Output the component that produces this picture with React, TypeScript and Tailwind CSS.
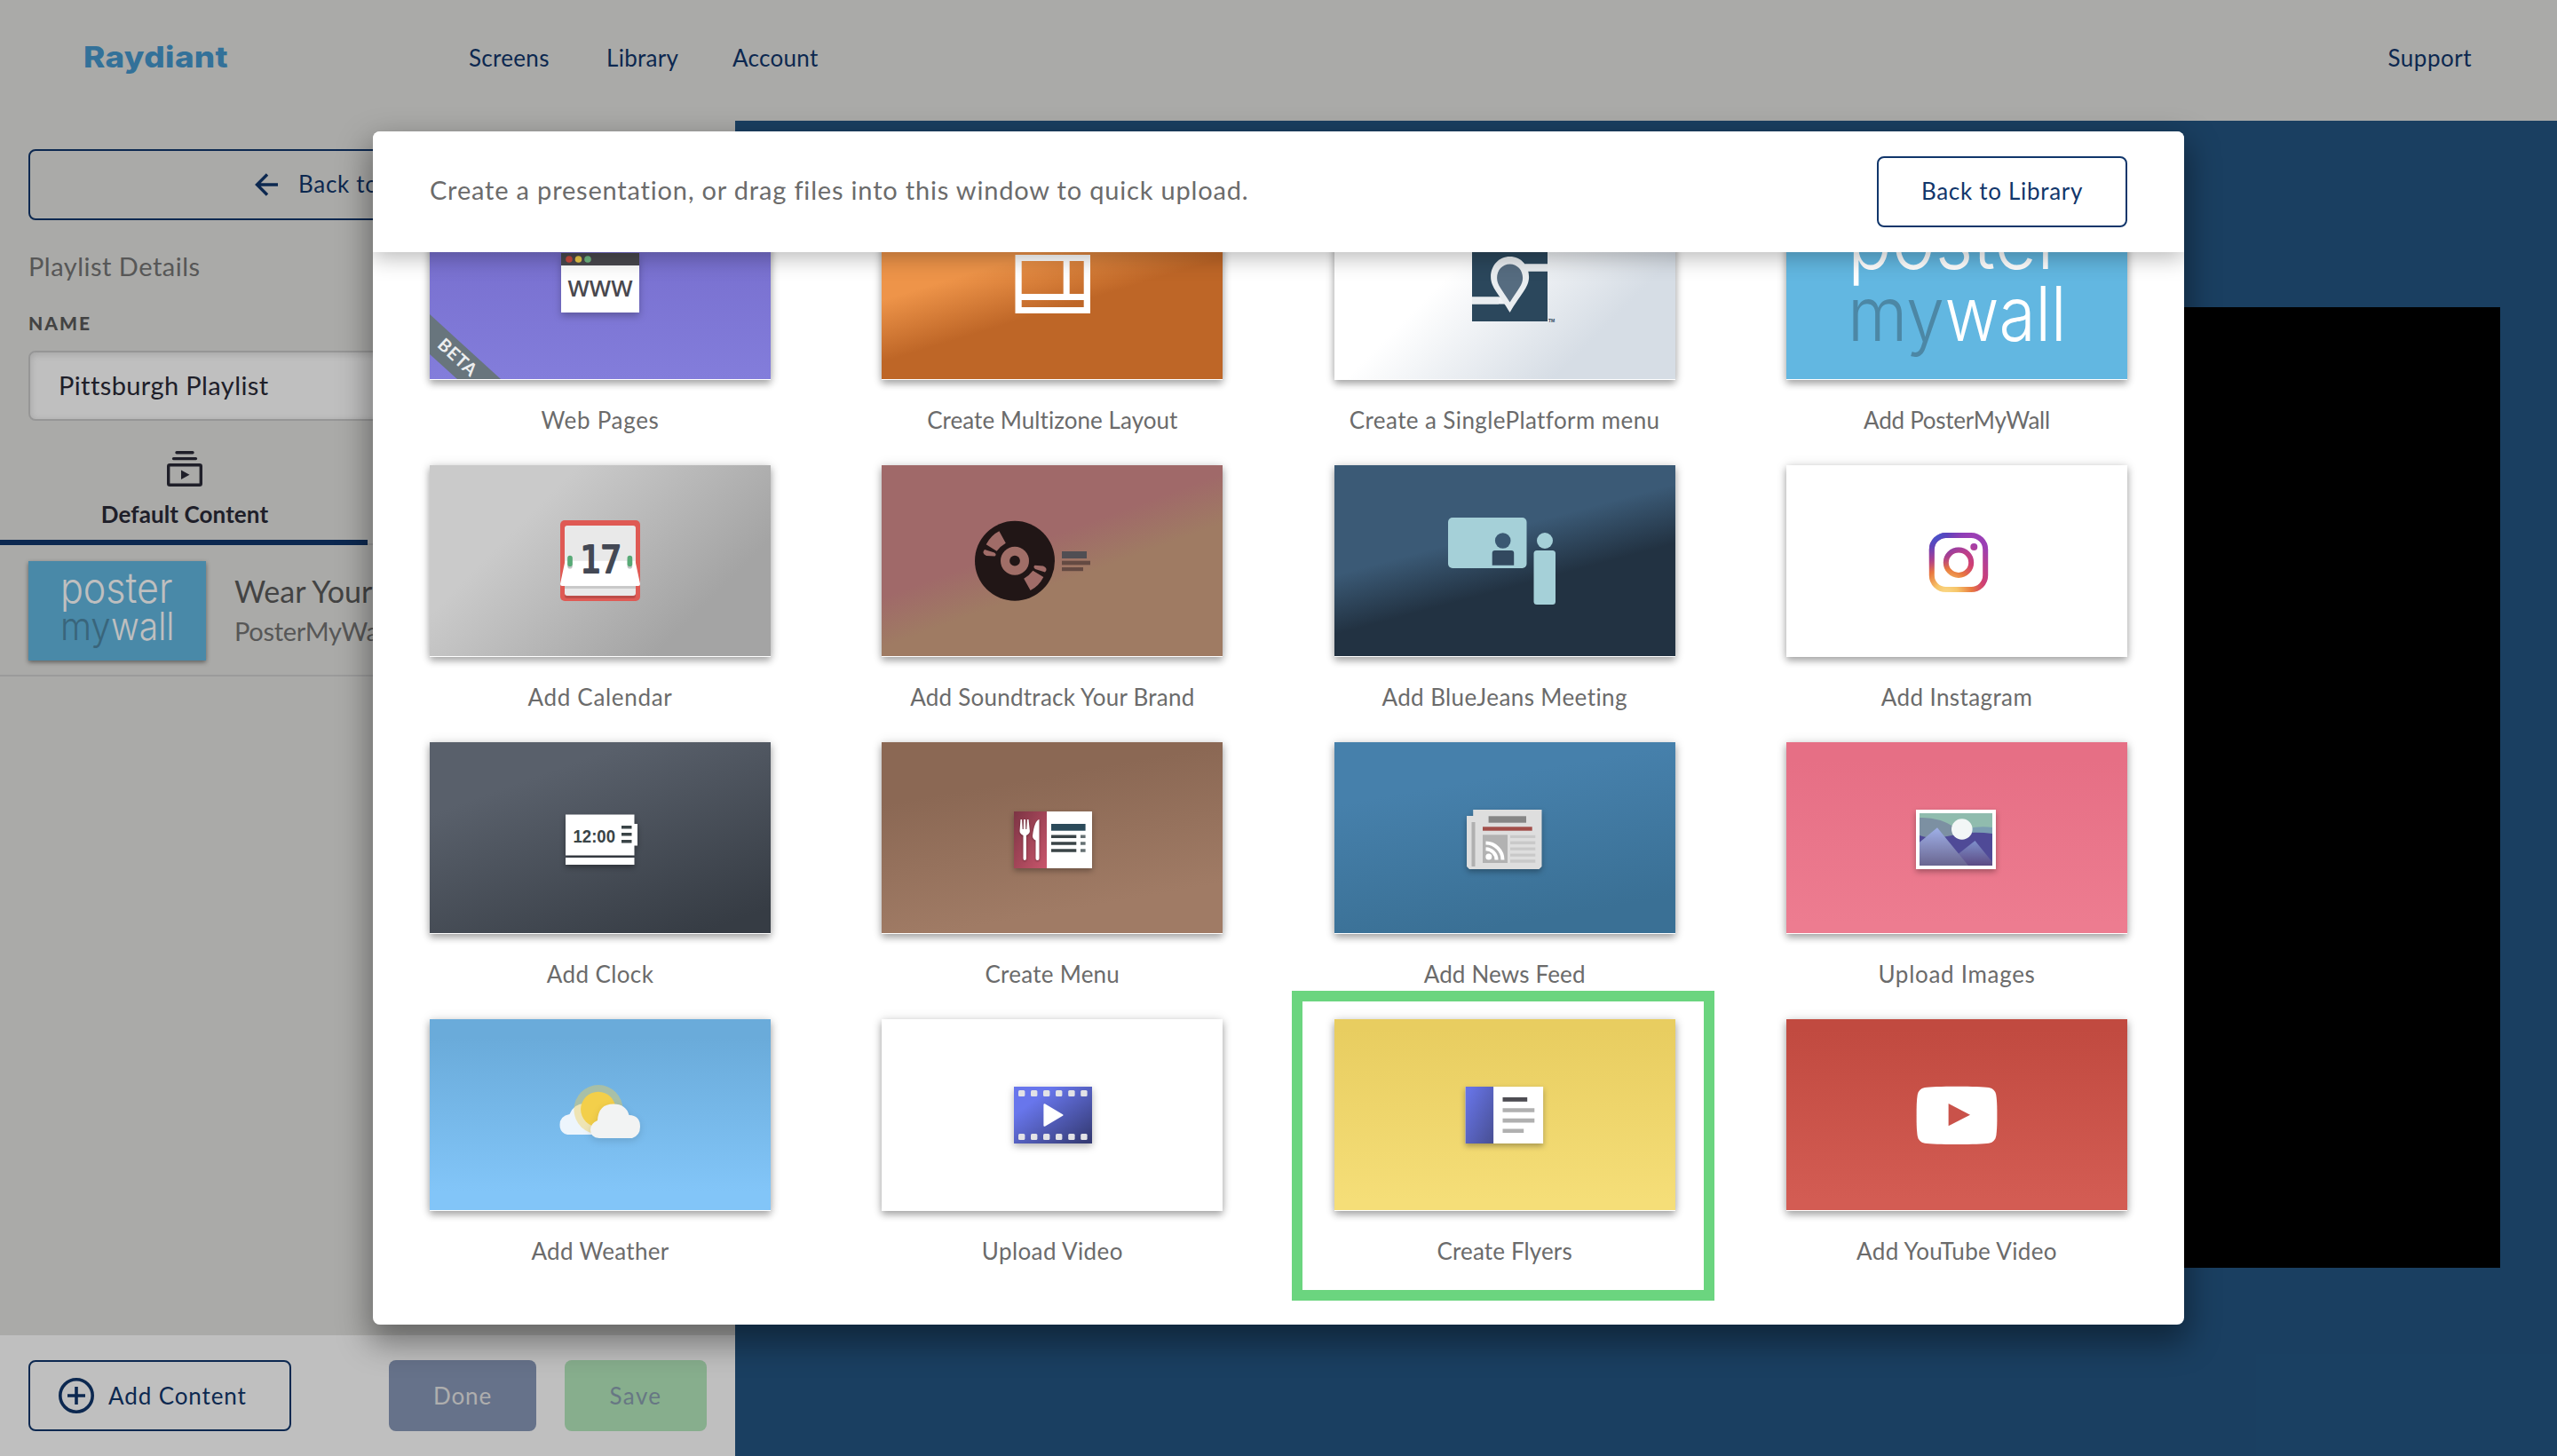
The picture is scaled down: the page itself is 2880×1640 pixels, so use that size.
import React, { ReactNode } from 'react';
import { clsx } from 'clsx';

/* ------------------------------------------------------------------ */
/* Shared pieces                                                        */
/* ------------------------------------------------------------------ */

function PosterMyWallLogo() {
  return (
    <g fontFamily="Inter, sans-serif" fontWeight="300" fill="#fff">
      <text x="69" y="91" fontSize="92" textLength="243" lengthAdjust="spacingAndGlyphs">
        poster
      </text>
      <text x="69" y="171.600" fontSize="85" textLength="109" lengthAdjust="spacingAndGlyphs" fill="#4c87a5">
        my
      </text>
      <text x="178.500" y="171.600" fontSize="85" textLength="137" lengthAdjust="spacingAndGlyphs">
        wall
      </text>
    </g>
  );
}

/* ------------------------------------------------------------------ */
/* Card artwork, drawn on the 384x216 card area                         */
/* ------------------------------------------------------------------ */

const WebPagesArt = () => (
  <>
    <g className="drop-shadow-[0_4px_4px_rgba(0,0,0,0.25)]">
      <rect x="148" y="73" width="88" height="67" fill="#fff" />
      <rect x="148" y="73" width="88" height="14" fill="#49484e" />
    </g>
    <circle cx="157" cy="80" r="3.8" fill="#c9483f" />
    <circle cx="167.5" cy="80" r="3.8" fill="#edca48" />
    <circle cx="178" cy="80" r="3.8" fill="#70b983" />
    <text x="192" y="122" fontFamily="Open Sans, sans-serif" fontSize="25" fontWeight="600" fill="#49484e" textAnchor="middle" textLength="73" lengthAdjust="spacingAndGlyphs">
      WWW
    </text>
    <path d="M0 142 80 215H31L0 187Z" fill="#68757d" />
    <text x="0" y="0" transform="translate(31.5 190.5) rotate(42.5)" dy="7" fontFamily="Lato, sans-serif" fontSize="20" fontWeight="700" fill="#eceeef" textAnchor="middle" letterSpacing="0.8">
      BETA
    </text>
  </>
);

const MultizoneArt = () => (
  <path
    fillRule="evenodd"
    fill="#fff"
    d="M150.5 75h84.5v66h-84.5ZM157.7 82v37h47v-37ZM211.7 82v37h16v-37ZM157.7 126v8h70v-8Z"
  />
);

const SinglePlatformArt = () => (
  <>
    <path d="M155 60h85v25.500h-85Z M155 60h45v62.500h-45Z M215 93.500h25v56.500h-85v-19.500h45Z" fill="#2b475c" />
    <path d="M155 122.500h30v8h-30Z M215 85.500h25v8h-25Z" fill="#e9edf0" />
    <path d="M197.600 77c-12.500 0-21.500 10-21.500 23 0 12 10 20 21.500 40 11.500-20 21.500-28 21.500-40 0-13-9-23-21.500-23Z" fill="#e9edf0" />
    <path d="M197.600 85.500c-8.500 0-14.500 7-14.500 15.500 0 8 5.500 13 14.500 27.500 9-14.500 14.500-19.500 14.500-27.500 0-8.500-6-15.500-14.500-15.500Z" fill="#566c80" />
    <text x="241" y="151" fontFamily="Liberation Sans, sans-serif" fontSize="5" fontWeight="700" fill="#2b475c">
      TM
    </text>
  </>
);

const CalendarArt = () => (
  <>
    <rect x="147" y="62" width="90" height="91" rx="5" fill="#df5a54" />
    <rect x="152" y="71" width="80" height="79" rx="3" fill="#bd4c48" />
    <rect x="152" y="68" width="80" height="79" rx="3" fill="#e9e9e9" />
    <rect x="152" y="136" width="80" height="3" fill="#c9c9c9" />
    <path d="M152.500 107.700h79l5.500 26q0 2.300-2 2.300h-86q-2 0-2-2.300Z" fill="#fff" />
    <rect x="155.200" y="104" width="5.600" height="12.500" rx="2.800" fill="#bfc4c2" />
    <rect x="222.600" y="104" width="5.600" height="12.500" rx="2.800" fill="#bfc4c2" />
    <rect x="155.200" y="101.700" width="5.600" height="12.300" rx="2.800" fill="#58aa76" />
    <rect x="222.600" y="101.700" width="5.600" height="12.300" rx="2.800" fill="#58aa76" />
    <text
      x="169"
      y="120.500"
      fontFamily="DejaVu Sans Mono, monospace"
      fontSize="43.500"
      fill="#434854"
      stroke="#434854"
      strokeWidth="2.200"
      strokeLinejoin="round"
      textLength="47"
      lengthAdjust="spacingAndGlyphs"
    >
      17
    </text>
  </>
);

const SoundtrackArt = () => (
  <>
    <circle cx="150" cy="107.700" r="45" fill="#211616" />
    <circle cx="150" cy="107.700" r="16" fill="#a06e67" />
    <circle cx="150" cy="107.700" r="5.900" fill="#211616" />
    <g fill="#a06c68">
      <path d="M132.400 74.300 139.800 87.700Q134 91 129.600 96.700L117.700 89.300Q123 79 132.400 74.300Z" />
      <path d="M116 95 127 98.500Q130 100.500 127.500 102.600L118 102Q112 99 116 95Z" />
      <g transform="rotate(180 150 107.700)">
        <path d="M132.400 74.300 139.800 87.700Q134 91 129.600 96.700L117.700 89.300Q123 79 132.400 74.300Z" />
        <path d="M116 95 127 98.500Q130 100.500 127.500 102.600L118 102Q112 99 116 95Z" />
      </g>
    </g>
    <rect x="203" y="97" width="28" height="8" fill="#504e53" />
    <rect x="203" y="107.700" width="32" height="4.600" fill="#644a42" />
    <rect x="203" y="115" width="24" height="4.200" fill="#644a42" />
  </>
);

const BlueJeansArt = () => (
  <>
    <rect x="128" y="59" width="88.500" height="57" rx="5" fill="#a5d0d8" />
    <circle cx="189.700" cy="85" r="8.800" fill="#3a5873" />
    <path d="M177.700 99q0-3 3-3h18.500q3 0 3 3v13.700h-24.500Z" fill="#32495f" />
    <circle cx="237" cy="85" r="9" fill="#a5d0d8" />
    <rect x="224.500" y="96" width="24.500" height="61" rx="3.500" fill="#a5d0d8" />
  </>
);

const InstagramArt = () => (
  <>
    <defs>
      <radialGradient id="ig-warm" gradientUnits="userSpaceOnUse" cx="180" cy="146" r="70">
        <stop offset="0" stopColor="#fbdc8c" />
        <stop offset="0.2" stopColor="#f6c468" />
        <stop offset="0.42" stopColor="#e8793f" />
        <stop offset="0.62" stopColor="#d03f72" />
        <stop offset="1" stopColor="#9b3fb5" />
      </radialGradient>
      <radialGradient id="ig-cool" gradientUnits="userSpaceOnUse" cx="166" cy="76" r="44">
        <stop offset="0" stopColor="#3c5bd0" />
        <stop offset="0.35" stopColor="#5145c0" stopOpacity="0.85" />
        <stop offset="1" stopColor="#8a3ab9" stopOpacity="0" />
      </radialGradient>
    </defs>
    {['url(#ig-warm)', 'url(#ig-cool)'].map((paint) => (
      <g key={paint} fill="none" stroke={paint} strokeWidth="6">
        <rect x="163.800" y="79" width="60.400" height="61" rx="16" />
        <circle cx="194" cy="109.700" r="14.200" />
        <circle cx="211.300" cy="92" r="4" fill={paint} stroke="none" />
      </g>
    ))}
  </>
);

const ClockArt = () => (
  <>
    <g fill="#fff" className="drop-shadow-[0_3px_3px_rgba(0,0,0,0.35)]">
      <path d="M153 81.500h77.500V92h3.500v24.500h-3.500v11H153Z" />
      <rect x="153" y="130" width="77.500" height="8" />
    </g>
    <text x="161.500" y="112.700" fontFamily="Liberation Sans, sans-serif" fontSize="21" fontWeight="700" fill="#3a4447" textLength="47.500" lengthAdjust="spacingAndGlyphs">
      12:00
    </text>
    <path d="M216 94h11.500v3.400H216Z M216 102h11.500v3.400H216Z M216 110h11.500v3.400H216Z" fill="#3a4447" />
  </>
);

const MenuArt = () => (
  <>
    <defs>
      <linearGradient id="menu-red" x1="0" y1="0" x2="1" y2="1">
        <stop offset="0" stopColor="#7c3444" />
        <stop offset="1" stopColor="#c9566c" />
      </linearGradient>
    </defs>
    <g className="drop-shadow-[0_3px_3px_rgba(0,0,0,0.3)]">
      <rect x="149" y="78" width="88" height="64" fill="#fff" />
      <rect x="149" y="78" width="37" height="64" fill="url(#menu-red)" />
    </g>
    <g fill="#fff" className="drop-shadow-[0_1px_1px_rgba(0,0,0,0.35)]">
      <path d="M156.500 87h1.600l.6 11h1l.3-11h2l.3 11h1l.6-11h1.600l1.400 13q0 3-4 5V131q0 2-1.700 2t-1.700-2V105q-4-2-4-5Z" />
      <path d="M177.500 87v44q0 2-2 2t-2-2V110.500q-3.500-1.500-3.500-5 2-17 7.500-18.500Z" />
    </g>
    <rect x="191" y="92" width="38.600" height="7.700" fill="#2b4a5a" />
    <path d="M191 104.500h28.300v3.600H191Z M191 112.200h28.300v3.600H191Z M191 120.200h28.300v3.600H191Z" fill="#3a4447" />
    <path d="M224 104.500h5.600v3.600H224Z M224 112.200h5.600v3.600H224Z M224 120.200h5.600v3.600H224Z" fill="#657073" />
  </>
);

const NewsArt = () => (
  <>
    <path
      d="M156.200 76h77.300v64l-3 3h-78.500l-3-3V83h7.200Z"
      fill="#dedede"
      className="drop-shadow-[0_3px_3px_rgba(0,0,0,0.3)]"
    />
    <rect x="154.500" y="90" width="4" height="50" fill="#b0b0b0" />
    <rect x="173.600" y="83.300" width="42.400" height="7.400" fill="#868686" />
    <rect x="167" y="95.300" width="55.700" height="4.400" fill="#a24e49" />
    <rect x="167" y="104.300" width="28" height="31.700" fill="#b2b2b2" />
    <g fill="none" stroke="#fff" strokeWidth="4">
      <path d="M170.500 120.200a12.300 12.300 0 0 1 12 12.300" />
      <path d="M170.500 113.400a19.200 19.200 0 0 1 19 19.100" />
    </g>
    <circle cx="173.800" cy="129" r="3.500" fill="#fff" />
    <path
      d="M198 104.700h28.300v3.400H198Z M198 111.500h28.300v3.400H198Z M198 118.400h28.300v3.400H198Z M198 125.400h28.300v3.400H198Z M198 132.300h28.300v3.400H198Z"
      fill="#c9c9c9"
    />
  </>
);

const ImagesArt = () => (
  <>
    <defs>
      <linearGradient id="peak-a" x1="0" y1="0" x2="0" y2="1">
        <stop offset="0" stopColor="#9fb0e8" />
        <stop offset="1" stopColor="#6a6690" />
      </linearGradient>
      <linearGradient id="peak-b" x1="0" y1="0" x2="0" y2="1">
        <stop offset="0" stopColor="#7f90cc" />
        <stop offset="1" stopColor="#5b4a83" />
      </linearGradient>
    </defs>
    <rect x="146" y="76" width="90" height="67" fill="#fff" className="drop-shadow-[0_3px_3px_rgba(0,0,0,0.3)]" />
    <rect x="150" y="80" width="82" height="59" fill="#90bcae" />
    <path d="M150 85q22-1 40 11 8 3 14 2.500 14-4 28-1.500v20h-82Z" fill="#7c90a2" />
    <path d="M205 97q14-3 27-1v8h-27Z" fill="#7a9db2" />
    <path d="M150 105q8 3 20 3 16-3 34-6 14-1 28 1v36h-82Z" fill="#4f4a97" />
    <circle cx="197.800" cy="98" r="11.800" fill="#f2f6f6" />
    <path d="M193.800 125.700 212.500 111 232 135v4h-32Z" fill="url(#peak-b)" />
    <path d="M150 112.700 170 96.300 205 139h-55Z" fill="url(#peak-a)" />
  </>
);

const WeatherArt = () => (
  <>
    <path d="M155 130q-8.500-2-8.500-11 0-10 11-12 5-12 17-12 14 0 16 14v21Z" fill="#edf5fc" />
    <circle cx="190" cy="101.700" r="27.600" fill="#efce55" fillOpacity="0.43" />
    <circle cx="189.800" cy="101.500" r="19.700" fill="#f3cf4a" />
    <path
      d="M191 134q-10-.5-10-9.500 0-7 8-10.500 1-18.500 18-18.500 14 0 17.500 12.500 12.500.5 12.500 13 0 10-9 13Z"
      fill="#f2f3f3"
      className="drop-shadow-[0_3px_4px_rgba(0,0,0,0.12)]"
    />
  </>
);

const VideoArt = () => (
  <>
    <defs>
      <linearGradient id="film" x1="0" y1="0" x2="1" y2="1">
        <stop offset="0.25" stopColor="#6876ec" />
        <stop offset="0.95" stopColor="#353b75" />
      </linearGradient>
    </defs>
    <rect x="149" y="76" width="88" height="64" fill="url(#film)" className="drop-shadow-[0_3px_4px_rgba(0,0,0,0.3)]" />
    {[154, 168, 182, 196, 210.200, 224.200].map((x) => (
      <g key={x} fill="#e2e2e6">
        <rect x={x} y="80" width="7.400" height="7" rx="1.500" />
        <rect x={x} y="129" width="7.400" height="7" rx="1.500" />
      </g>
    ))}
    <path d="M183.400 96.200 203.500 108 183.400 119.800Z" fill="#fff" stroke="#fff" strokeWidth="2" strokeLinejoin="round" />
  </>
);

const FlyersArt = () => (
  <>
    <defs>
      <linearGradient id="flyer-cover" x1="0" y1="0" x2="1" y2="1">
        <stop offset="0.1" stopColor="#6673e4" />
        <stop offset="1" stopColor="#484f93" />
      </linearGradient>
    </defs>
    <g className="drop-shadow-[0_3px_3px_rgba(0,0,0,0.3)]">
      <rect x="147.600" y="76" width="87.500" height="64" fill="#fff" />
      <rect x="147.600" y="76" width="31.500" height="64" fill="url(#flyer-cover)" />
    </g>
    <rect x="189.500" y="88" width="27.700" height="4.800" fill="#4d4c52" />
    <path d="M189.500 100.200h35.800v4.600h-35.800Z M189.500 111.800h35.800v4.600h-35.800Z M189.500 123.500h23.700v4.600h-23.700Z" fill="#b0b0b0" />
  </>
);

const YouTubeArt = () => (
  <>
    <path
      d="M192 75.800c17 0 30 .4 36 1.200 5 .8 7.600 4 8.400 9 .8 6 1 12 1 22.400s-.2 16.400-1 22.400c-.8 5-3.400 8.200-8.400 9-6 .8-19 1.200-36 1.200s-30-.4-36-1.200c-5-.8-7.600-4-8.400-9-.8-6-1-12-1-22.400s.2-16.400 1-22.400c.8-5 3.400-8.200 8.400-9 6-.8 19-1.200 36-1.200Z"
      fill="#fff"
    />
    <path d="M182.600 95 207 107.700 182.600 120.300Z" fill="#c9524a" />
  </>
);

/* ------------------------------------------------------------------ */
/* Presentation grid                                                    */
/* ------------------------------------------------------------------ */

interface PresentationType {
  label: string;
  background: string;
  art: ReactNode;
  /** Letter spacing of the label, defaults to tracking-[0.4px] */
  tracking?: string;
}

const PRESENTATION_TYPES: PresentationType[] = [
  { label: 'Web Pages', background: 'bg-[linear-gradient(180deg,#766dcd_20%,#837ddb_100%)]', art: <WebPagesArt />, tracking: 'tracking-[0.7px]' },
  { label: 'Create Multizone Layout', background: 'bg-[linear-gradient(163deg,#ee9449_38%,#be6627_59%)]', art: <MultizoneArt />, tracking: 'tracking-[0.05px]' },
  { label: 'Create a SinglePlatform menu', background: 'bg-[linear-gradient(135deg,#ffffff_38%,#d6dde5_77%)]', art: <SinglePlatformArt /> },
  { label: 'Add PosterMyWall', background: 'bg-[#62b7e1]', art: <PosterMyWallLogo />, tracking: 'tracking-[-0.25px]' },
  { label: 'Add Calendar', background: 'bg-[linear-gradient(135deg,#cacaca_28%,#a4a4a4_78%)]', art: <CalendarArt />, tracking: 'tracking-[0.7px]' },
  { label: 'Add Soundtrack Your Brand', background: 'bg-[linear-gradient(160deg,#a06969_42%,#9f7b63_58%)]', art: <SoundtrackArt />, tracking: 'tracking-[0.25px]' },
  { label: 'Add BlueJeans Meeting', background: 'bg-[linear-gradient(165deg,#3b5a76_39%,#223242_60%)]', art: <BlueJeansArt /> },
  { label: 'Add Instagram', background: 'bg-white', art: <InstagramArt /> },
  { label: 'Add Clock', background: 'bg-[linear-gradient(160deg,#59606b_23%,#363c44_92%)]', art: <ClockArt /> },
  { label: 'Create Menu', background: 'bg-[linear-gradient(170deg,#8b6854_25%,#a07b65_80%)]', art: <MenuArt />, tracking: 'tracking-[0.25px]' },
  { label: 'Add News Feed', background: 'bg-[linear-gradient(170deg,#4680ab_25%,#3a7095_85%)]', art: <NewsArt />, tracking: 'tracking-[0.15px]' },
  { label: 'Upload Images', background: 'bg-[linear-gradient(180deg,#e66f85_10%,#ed7c90_95%)]', art: <ImagesArt />, tracking: 'tracking-[0.7px]' },
  { label: 'Add Weather', background: 'bg-[linear-gradient(180deg,#6aabda_10%,#82c5f8_90%)]', art: <WeatherArt />, tracking: 'tracking-[0.3px]' },
  { label: 'Upload Video', background: 'bg-white', art: <VideoArt />, tracking: 'tracking-[0.4px]' },
  { label: 'Create Flyers', background: 'bg-[linear-gradient(180deg,#e8cd60_5%,#f5de78_95%)]', art: <FlyersArt />, tracking: 'tracking-[0.15px]' },
  { label: 'Add YouTube Video', background: 'bg-[linear-gradient(180deg,#c14a40_5%,#d35c53_95%)]', art: <YouTubeArt />, tracking: 'tracking-[0.35px]' },
];

function PresentationCard({ label, background, art, tracking = 'tracking-[0.4px]' }: PresentationType) {
  return (
    <div className="relative flex h-[312px] w-[384px] flex-col">
      <div className="h-[216px] shrink-0 bg-white shadow-[0_4px_8px_rgba(0,0,0,0.32),0_0_12px_rgba(0,0,0,0.12)]">
        <svg viewBox="0 0 384 215" className={clsx('block h-[215px] w-[384px]', background)}>
          {art}
        </svg>
      </div>
      <div className={clsx('mt-[29px] text-center text-[26px] leading-8 whitespace-nowrap text-[#6b6b6b]', tracking)}>
        {label}
      </div>
      {label === 'Create Flyers' && (
        <div className="absolute -top-8 -left-12 h-[349px] w-[476px] border-[12px] border-[#6bd57f]" />
      )}
    </div>
  );
}

function CreateModal() {
  return (
    <div className="absolute top-[148px] left-[420px] flex h-[1344px] w-[2040px] flex-col overflow-hidden rounded-lg bg-white">
      <header className="z-10 flex h-[136px] shrink-0 items-center justify-between bg-white px-16 shadow-[0_6px_24px_rgba(0,0,0,0.28)]">
        <p className="pb-1 text-[29px] tracking-[0.82px] text-[#6b6b6b]">
          Create a presentation, or drag files into this window to quick upload.
        </p>
        <button className="h-20 w-[282px] rounded-lg border-2 border-[#11366b] pb-[2px] text-[26px] tracking-[0.7px] text-[#11366b]">
          Back to Library
        </button>
      </header>
      <div className="-mt-[72px] grid grid-cols-[repeat(4,384px)] justify-between px-16">
        {PRESENTATION_TYPES.map((type) => (
          <PresentationCard key={type.label} {...type} />
        ))}
      </div>
    </div>
  );
}

/* ------------------------------------------------------------------ */
/* Page behind the modal                                                */
/* ------------------------------------------------------------------ */

function TopNav() {
  return (
    <nav className="flex h-[136px] shrink-0 items-center bg-[#e3e3e0] px-24 pb-[6px] text-[26px] tracking-[0.3px] text-[#11366b]">
      <div className="-ml-2 w-[440px]">
        <svg viewBox="0 0 180 56" className="block h-14 w-[180px]">
          <text
            x="6"
            y="38.500"
            fontFamily="Inter, sans-serif"
            fontSize="33"
            fontWeight="800"
            fill="#4497cd"
            textLength="163"
            lengthAdjust="spacingAndGlyphs"
          >
            Raydiant
          </text>
        </svg>
      </div>
      <span className="w-[155px]">Screens</span>
      <span className="w-[142px]">Library</span>
      <span>Account</span>
      <span className="ml-auto tracking-[0.5px]">Support</span>
    </nav>
  );
}

function Sidebar() {
  return (
    <aside className="flex w-[828px] shrink-0 flex-col bg-[#e3e3e0]">
      <div className="flex flex-col px-8 pt-8">
        <button className="flex h-20 items-center gap-[23px] rounded-lg border-2 border-[#11366b] pl-[253px] text-[26px] tracking-[0.7px] text-[#11366b]">
          <svg viewBox="0 0 26 26" className="h-[26px] w-[26px]" fill="none" stroke="currentColor" strokeWidth="3.4">
            <path d="M26 13H3M14 1.500 2.500 13 14 24.500" />
          </svg>
          <span className="pb-[2px]">Back to Playlists</span>
        </button>
        <h2 className="mt-8 text-[29px] leading-10 tracking-[0.5px] text-[#747474]">Playlist Details</h2>
        <label className="mt-[30px] text-[21px] leading-7 font-black tracking-[2px] text-[#5a5a5a]">NAME</label>
        <div className="mt-[17px] flex h-[79px] items-center rounded-lg border-2 border-[#c9c9c9] bg-white px-8 pb-[2px] text-[29px] tracking-[0.4px] text-[#2a2a37] shadow-[inset_0_2px_8px_rgba(0,0,0,0.15)]">
          Pittsburgh Playlist
        </div>
      </div>

      <div className="flex h-[140px] shrink-0 border-b-2 border-[#cfcfcf]">
        <div className="-mb-[2px] flex w-[414px] flex-col items-center border-b-[6px] border-[#11366b] pt-[34px] pl-[2px] text-[#2a2a37]">
          <svg viewBox="0 0 40 40" className="h-10 w-10" fill="none" stroke="currentColor" strokeLinecap="round">
            <path d="M11 1.700H29M7.500 8.600H32.500" strokeWidth="3.400" />
            <rect x="1.700" y="15.700" width="36.600" height="22.600" rx="1.500" strokeWidth="3.400" />
            <path d="M16 21.500 25.500 26.800 16 32Z" fill="currentColor" stroke="none" />
          </svg>
          <span className="mt-[15px] text-[26px] leading-8 font-bold tracking-[0.1px]">Default Content</span>
        </div>
      </div>

      <div className="flex h-[148px] shrink-0 gap-8 border-b-2 border-[#cfcfcf] px-8 pt-[18px]">
        <svg viewBox="0 0 384 215" className="h-28 w-[200px] bg-[#62b7e1] shadow-[0_2px_5px_rgba(0,0,0,0.45)]">
          <PosterMyWallLogo />
        </svg>
        <div className="flex flex-col pt-3 whitespace-nowrap">
          <span className="text-[34px] leading-[44px] text-[#5a5a5a]">Wear Your Mask</span>
          <span className="text-[29px] leading-[46px] tracking-[-0.3px] text-[#747474]">PosterMyWall</span>
        </div>
      </div>

      <footer className="mt-auto flex h-[136px] shrink-0 items-center bg-white px-8 text-[26px] tracking-[0.9px]">
        <button className="flex h-20 w-[296px] items-center gap-4 rounded-lg border-2 border-[#11366b] pl-8 text-[#11366b]">
          <svg viewBox="0 0 40 40" className="h-10 w-10" fill="none" stroke="currentColor" strokeWidth="3.600">
            <circle cx="20" cy="20" r="18.200" />
            <path d="M20 10V30M10 20H30" />
          </svg>
          Add Content
        </button>
        <button className="ml-[110px] h-20 w-[166px] rounded-lg bg-[#8898b8] text-[#e8e8e8]">Done</button>
        <button className="ml-8 h-20 w-40 rounded-lg bg-[#b4e8bc] tracking-[1.4px] text-[#8a9fb0]">Save</button>
      </footer>
    </aside>
  );
}

export default function App() {
  return (
    <div className="relative flex h-[1640px] w-[2880px] flex-col overflow-hidden font-[Lato,sans-serif]">
      <TopNav />
      <div className="flex flex-1">
        <Sidebar />
        <main className="flex-1 bg-[#235582] px-16 pt-[210px]">
          <div className="h-[1082px] bg-black" />
        </main>
      </div>

      <div className="absolute inset-0 bg-black/25" />
      <div className="absolute top-[148px] left-[420px] h-[1344px] w-[2040px] rounded-lg shadow-[0_16px_36px_4px_rgba(0,0,0,0.4)]" />
      <CreateModal />
    </div>
  );
}
